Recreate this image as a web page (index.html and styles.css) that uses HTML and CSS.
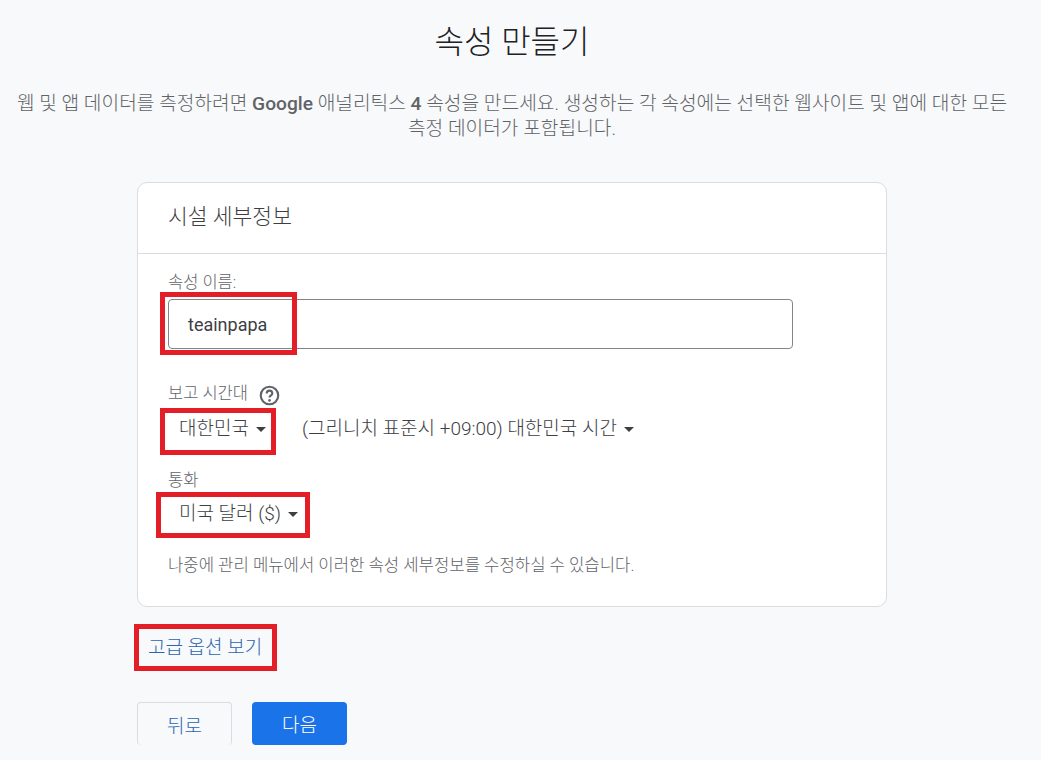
FILE: index.html
```html
<html>
    <head>
        <title>속성 만들기</title>
        <link rel="stylesheet" href="styles.css">
    </head>
    <body>
        <main class="page">
            <h1 class="title">속성 만들기</h1>
            <p class="intro">웹 및 앱 데이터를 측정하려면 <span class="intro-latin">Google</span> 애널리틱스 <span class="intro-latin">4</span> 속성을 만드세요. 생성하는 각 속성에는 선택한 웹사이트 및 앱에 대한 모든<br>측정 데이터가 포함됩니다.</p>

            <section class="card">
                <h2 class="card-title">시설 세부정보</h2>
                <div class="card-body">
                    <div class="field-label">속성 이름:</div>
                    <div class="text-input">teainpapa</div>

                    <div class="field-label field-label-zone">
                        보고 시간대
                        <svg class="help" width="21" height="21" viewBox="0 0 24 24"><circle cx="12" cy="12" r="10" fill="none" stroke="#5f6368" stroke-width="2.4"/><path d="M8.8 9.6a3.2 3.2 0 0 1 6.4 0c0 2.2-3.2 2.4-3.2 4.8" fill="none" stroke="#5f6368" stroke-width="2.4"/><circle cx="12" cy="17.6" r="1.5" fill="#5f6368"/></svg>
                    </div>
                    <div class="selects">
                        <div class="select select-country">대한민국<span class="caret"></span></div>
                        <div class="select select-zone">(그리니치 표준시 +09:00) 대한민국 시간<span class="caret"></span></div>
                    </div>

                    <div class="field-label field-label-currency">통화</div>
                    <div class="select select-currency">미국 달러 ($)<span class="caret"></span></div>

                    <p class="hint">나중에 관리 메뉴에서 이러한 속성 세부정보를 수정하실 수 있습니다.</p>
                </div>
            </section>

            <a class="advanced">고급 옵션 보기</a>

            <div class="buttons">
                <button class="btn btn-back">뒤로</button>
                <button class="btn btn-next">다음</button>
            </div>

            <!-- red marks drawn over the screenshot -->
            <div class="mark mark-name"></div>
            <div class="mark mark-country"></div>
            <div class="mark mark-currency"></div>
            <div class="mark mark-advanced"></div>
        </main>
    </body>
</html>
```

FILE: styles.css
```css
html, body {
    margin: 0;
    background: #f8f9fa;
}
body {
    font-family: Roboto, "Noto Sans CJK KR", sans-serif;
    color: #3c4043;
}
.page {
    position: relative;
    width: 1024px;
    height: 745px;
    overflow: hidden;
    display: flex;
    flex-direction: column;
    align-items: center;
}
.title {
    margin: 20px 0 0;
    font-size: 32px;
    line-height: 44px;
    font-weight: 300;
    color: #202124;
}
.intro {
    margin: 27px 0 0;
    font-size: 19.2px;
    line-height: 25px;
    font-weight: 300;
    text-align: center;
    color: #5f6368;
    white-space: nowrap;
}
.intro-latin {
    font-weight: 500;
}

.card {
    box-sizing: border-box;
    flex-shrink: 0;
    width: 750px;
    height: 425px;
    margin-top: 41px;
    background: #fff;
    border: 1px solid #dadce0;
    border-radius: 10px;
}
.card-title {
    box-sizing: border-box;
    height: 71px;
    margin: 0;
    padding: 20px 30px 0;
    font-size: 21.5px;
    line-height: 28px;
    font-weight: 300;
    color: #3c4043;
    border-bottom: 1px solid #dadce0;
}
.card-body {
    padding: 19px 30px 0;
}
.field-label {
    font-size: 16.5px;
    line-height: 20px;
    font-weight: 300;
    color: #5f6368;
}
.text-input {
    box-sizing: border-box;
    width: 625px;
    height: 50px;
    margin-top: 6px;
    padding-left: 19px;
    font-size: 18px;
    line-height: 50px;
    color: #3c4043;
    border: 1px solid #80868b;
    border-radius: 4px;
}
.field-label-zone {
    display: flex;
    align-items: center;
    gap: 11px;
    margin-top: 33px;
}
.help {
    margin: 3px 0 -1px;
}
.selects {
    display: flex;
    margin-top: 12px;
}
.select {
    display: flex;
    align-items: center;
    font-size: 19px;
    line-height: 24px;
    font-weight: 300;
    color: #3c4043;
}
.select-country {
    padding-left: 11px;
    width: 134px;
    box-sizing: border-box;
}
.select-currency {
    margin-top: 11px;
    padding-left: 11px;
}
.caret {
    width: 0;
    height: 0;
    margin-left: 7px;
    border-left: 5px solid transparent;
    border-right: 5px solid transparent;
    border-top: 5px solid #3c4043;
}
.field-label-currency {
    margin-top: 30px;
}
.hint {
    margin: 30px 0 0;
    font-size: 16.7px;
    line-height: 20px;
    font-weight: 300;
    color: #5f6368;
}

.advanced {
    align-self: flex-start;
    margin: 29px 0 0 148px;
    font-size: 19px;
    line-height: 24px;
    font-weight: 300;
    color: #2a65b0;
}
.buttons {
    align-self: flex-start;
    display: flex;
    gap: 20px;
    margin: 42px 0 0 137px;
}
.btn {
    width: 95px;
    height: 43px;
    padding: 0;
    font: inherit;
    font-size: 19px;
    font-weight: 300;
    border-radius: 4px;
}
.btn-back {
    background: transparent;
    border: 1px solid #dadce0;
    border-bottom: 0;
    color: #2a65b0;
}
.btn-next {
    background: #1a73e8;
    border: 0;
    color: #fff;
}

.mark {
    position: absolute;
    box-sizing: border-box;
    border: 5px solid #e41e26;
}
.mark-name {
    left: 160px;
    top: 292px;
    width: 137px;
    height: 63px;
}
.mark-country {
    left: 160px;
    top: 408px;
    width: 116px;
    height: 47px;
}
.mark-currency {
    left: 156px;
    top: 492px;
    width: 154px;
    height: 46px;
}
.mark-advanced {
    left: 134px;
    top: 624px;
    width: 143px;
    height: 47px;
}
```
